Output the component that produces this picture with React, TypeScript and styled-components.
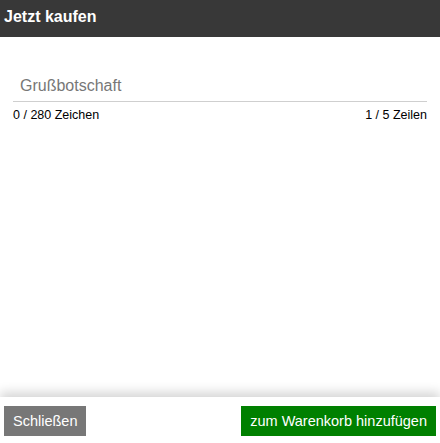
import React, { useState } from 'react';
import styled, { createGlobalStyle } from 'styled-components';

const GlobalStyle = createGlobalStyle`
  html, body {
    margin: 0;
    padding: 0;
    height: 100%;
  }
  #root {
    height: 100%;
  }
  * {
    box-sizing: border-box;
  }
`;

const Dialog = styled.div`
  display: flex;
  flex-direction: column;
  height: 100vh;
  background: #fff;
  font-family: 'Liberation Sans', Arial, sans-serif;
`;

const Header = styled.div`
  height: 37px;
  background: #383838;
  color: #fff;
  font-size: 16px;
  font-weight: bold;
  padding: 0 4px;
  display: flex;
  align-items: center;
  padding-bottom: 3px;
`;

const Body = styled.div`
  flex: 1;
  padding: 36px 13px 0;
`;

const MessageField = styled.textarea`
  display: block;
  width: 100%;
  height: 29px;
  border: none;
  border-bottom: 1px solid #cfcfcf;
  padding: 2px 7px 0;
  font-family: 'Liberation Sans', Arial, sans-serif;
  font-size: 16px;
  line-height: 22px;
  resize: none;
  outline: none;
  overflow: hidden;

  &::placeholder {
    color: #777;
  }
`;

const Counters = styled.div`
  display: flex;
  justify-content: space-between;
  margin-top: 6px;
  font-size: 12.5px;
  color: #000;
`;

const Footer = styled.div`
  display: flex;
  justify-content: space-between;
  align-items: flex-start;
  height: 46px;
  padding: 9px 4px 0;
  background: #fff;
  box-shadow: 0 -5px 10px rgba(0, 0, 0, 0.16);
`;

const Button = styled.button<{ $primary?: boolean }>`
  height: 30px;
  padding: 0 9px;
  border: none;
  border-radius: 0;
  background: ${({ $primary }) => ($primary ? '#008000' : '#777777')};
  color: #fff;
  font-family: 'Liberation Sans', Arial, sans-serif;
  font-size: 14.5px;
  cursor: pointer;
`;

const MAX_CHARS = 280;
const MAX_LINES = 5;

export default function App() {
  const [text, setText] = useState('');
  const lines = text.split('\n').length;

  return (
    <Dialog>
      <GlobalStyle />
      <Header>Jetzt kaufen</Header>
      <Body>
        <MessageField
          placeholder="Grußbotschaft"
          value={text}
          maxLength={MAX_CHARS}
          onChange={(e) => setText(e.target.value)}
        />
        <Counters>
          <span>{text.length} / {MAX_CHARS} Zeichen</span>
          <span>{lines} / {MAX_LINES} Zeilen</span>
        </Counters>
      </Body>
      <Footer>
        <Button>Schließen</Button>
        <Button $primary>zum Warenkorb hinzufügen</Button>
      </Footer>
    </Dialog>
  );
}
